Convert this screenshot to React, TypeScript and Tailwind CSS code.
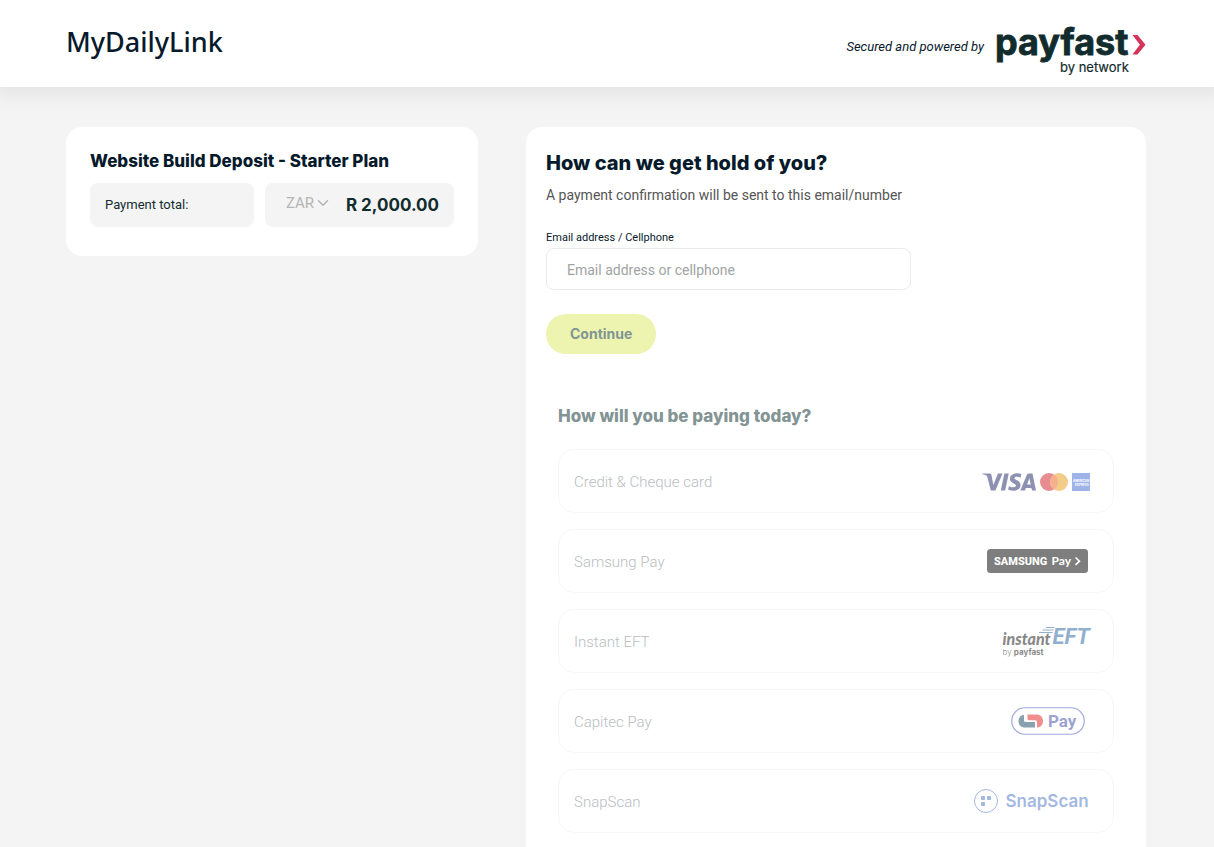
import React, { useState } from 'react';
import { ChevronDown } from 'lucide-react';
import { SiVisa } from 'react-icons/si';

const PayfastLogo = () => (
  <svg viewBox="0 0 152 50" className="h-[50px] w-[152px] overflow-visible" role="img" aria-label="payfast by network">
    <text x="1" y="29" fontSize="36" fontWeight="700" fill="#122c2e" stroke="#122c2e" strokeWidth="0.8" fontFamily="Inter, sans-serif">
      payfast
    </text>
    <text x="66" y="46" fontSize="13" fill="#122c2e" stroke="#122c2e" strokeWidth="0.2" fontFamily="Inter, sans-serif">
      by network
    </text>
    <path d="M138.500 9h5l8 9.800-8 9.800h-5l7.400-9.800z" fill="#d4335b" />
  </svg>
);

const CardLogos = () => (
  <div className="mt-0.5 flex items-center gap-1">
    <SiVisa className="h-[54px] w-[54px] text-[#1f2767]" aria-label="Visa" />
    <svg viewBox="0 0 28 18" className="h-[18px] w-7" aria-label="Mastercard">
      <circle cx="9" cy="9" r="9" fill="#d01c24" />
      <circle cx="19" cy="9" r="9" fill="#e89a18" />
      <path d="M14 1.5a9 9 0 0 1 0 15a9 9 0 0 1 0-15z" fill="#ee651c" />
    </svg>
    <svg viewBox="0 0 18 18" className="h-[18px] w-[18px]" aria-label="American Express">
      <rect width="18" height="18" fill="#4069d2" />
      <text x="1" y="8.500" fontSize="3" fontWeight="700" fill="#fff" fontFamily="Inter, sans-serif">
        AMERICAN
      </text>
      <text x="3" y="12.500" fontSize="3" fontWeight="700" fill="#fff" fontFamily="Inter, sans-serif">
        EXPRESS
      </text>
    </svg>
  </div>
);

const SamsungLogo = () => (
  <svg viewBox="0 0 102 24" className="mr-0.5 h-6 w-[102px]" aria-label="Samsung Pay">
    <rect x="1" width="101" height="24" rx="3.5" fill="#000" />
    <text x="8" y="16" fontSize="11" fontWeight="800" fill="#fff" fontFamily="Roboto, sans-serif">
      SAMSUNG
    </text>
    <text x="65.500" y="16" fontSize="12" fontWeight="700" fill="#fff" fontFamily="Lato, sans-serif">
      Pay
    </text>
    <path d="M89.500 8.500l4 3.700-4 3.700" fill="none" stroke="#fff" strokeWidth="1.600" />
  </svg>
);

const InstantEftLogo = () => (
  <svg viewBox="0 0 88 32" className="h-8 w-[88px] overflow-visible" aria-label="instantEFT by payfast">
    <text x="0.500" y="20" fontSize="16" fontWeight="900" fontStyle="italic" fill="#111" fontFamily="Lato, sans-serif">
      instant
    </text>
    <text x="50.500" y="18.500" fontSize="22" fontWeight="700" fontStyle="italic" fill="#24639c" fontFamily="'Liberation Sans Narrow', Roboto, sans-serif">
      EFT
    </text>
    <path d="M44 2.500h8.500M40.500 5h11M37 7.500h13.500" stroke="#24639c" strokeWidth="1" />
    <text x="0.500" y="30" fontSize="8" fill="#111" fontFamily="Inter, sans-serif">
      by <tspan fontWeight="700">payfast</tspan>
    </text>
  </svg>
);

const CapitecLogo = () => (
  <svg viewBox="0 0 74 28" className="mr-[5px] h-7 w-[74px]" aria-label="Capitec Pay">
    <rect x="0.75" y="0.75" width="72.5" height="26.5" rx="13.25" fill="#fff" stroke="#4353b5" strokeWidth="1.2" />
    <path d="M13 8v5.500c0 1 .8 1.400 1.800 1.400h9.200v5.600H14c-4 0-6.500-2.500-6.500-6.300C7.500 10.700 9.800 8 13 8z" fill="#154561" />
    <path d="M16.500 7.500h9c4 0 6.500 2.500 6.500 6.500 0 3.500-2 6.500-6 6.500V15c0-1-.6-1.700-1.700-1.700h-6c-1.200 0-1.800-.7-1.800-1.700z" fill="#e3201f" />
    <text x="37" y="20" fontSize="17" fontWeight="700" fill="#3a48a8" fontFamily="Roboto, sans-serif">
      Pay
    </text>
  </svg>
);

const SnapScanLogo = () => (
  <svg viewBox="0 0 117 24" className="h-6 w-[117px] overflow-visible" aria-label="SnapScan">
    <circle cx="13" cy="12" r="11.500" fill="none" stroke="#4a73c4" strokeWidth="1" />
    <rect x="8" y="7" width="4" height="4" rx="0.8" fill="#4a73c4" />
    <rect x="14" y="7" width="4" height="4" rx="0.8" fill="#4a73c4" />
    <rect x="8" y="13" width="4" height="4" rx="0.8" fill="#4a73c4" />
    <text x="32.500" y="18" fontSize="17" fontWeight="600" fill="#4a73c4" fontFamily="Inter, sans-serif">
      SnapScan
    </text>
  </svg>
);

const methods = [
  { name: 'Credit & Cheque card', logo: <CardLogos /> },
  { name: 'Samsung Pay', logo: <SamsungLogo /> },
  { name: 'Instant EFT', logo: <InstantEftLogo /> },
  { name: 'Capitec Pay', logo: <CapitecLogo /> },
  { name: 'SnapScan', logo: <SnapScanLogo /> },
];

const Header = () => (
  <header className="relative bg-white shadow-[0_0_20px_8px_rgba(0,0,0,0.07)]">
    <div className="mx-auto flex h-[87px] max-w-[1082px] items-center justify-between pr-0.5">
      <div className="pb-1 font-['Noto_Sans',sans-serif] text-[27px] leading-9 font-medium text-[#071a2c]">MyDailyLink</div>
      <div className="flex items-center gap-2.5 pt-3.5">
        <span className="pb-2 text-[13px] leading-4 italic">Secured and powered by</span>
        <PayfastLogo />
      </div>
    </div>
  </header>
);

const OrderSummary = () => (
  <section className="self-start rounded-2xl bg-white px-6 pt-[22px] pb-[29px]">
    <h1 className="font-[Inter,sans-serif] text-[17px] leading-6 font-extrabold text-[#071a2c]">Website Build Deposit - Starter Plan</h1>
    <div className="mt-2.5 flex gap-[11px]">
      <div className="flex h-11 flex-1 items-center rounded-lg bg-[#f4f4f4] px-[15px] text-[13px] text-[#122c2e]">Payment total:</div>
      <div className="flex h-11 items-center justify-between gap-4 rounded-lg bg-[#f4f4f4] pr-[15px] pl-[21px]">
        <div className="relative flex items-center pb-1 text-[#b5b5b5]">
          <select aria-label="Currency" className="w-11 appearance-none bg-transparent text-[15px] leading-5" defaultValue="ZAR">
            <option>ZAR</option>
          </select>
          <ChevronDown className="pointer-events-none absolute -right-0.5 h-[18px] w-[18px]" strokeWidth={2} />
        </div>
        <span className="font-[Inter,sans-serif] text-[17px] leading-6 font-bold text-[#122c2e]">R 2,000.00</span>
      </div>
    </div>
  </section>
);

const ContactForm = () => {
  const [contact, setContact] = useState('');

  return (
    <form onSubmit={(e) => e.preventDefault()}>
      <h2 className="font-[Inter,sans-serif] text-[20px] leading-7 font-extrabold text-[#071a2c]">How can we get hold of you?</h2>
      <p className="mt-1.5 text-sm leading-6 text-[#555]">A payment confirmation will be sent to this email/number</p>
      <label htmlFor="contact" className="mt-[23px] block text-[11px] leading-4">
        Email address / Cellphone
      </label>
      <input
        id="contact"
        type="text"
        value={contact}
        onChange={(e) => setContact(e.target.value)}
        placeholder="Email address or cellphone"
        className="mt-0.5 block h-[42px] w-full max-w-[365px] rounded-lg border border-[#e8ebeb] px-5 pt-0.5 text-sm placeholder:text-[#a0a4a4]"
      />
      <button type="submit" className="mt-6 block h-10 rounded-full bg-[#ecf4b0] px-6 font-[Inter,sans-serif] text-sm font-bold text-[#839494]">
        Continue
      </button>
    </form>
  );
};

const PaymentMethods = () => (
  <div className="mt-[50px] px-3">
    <h2 className="font-[Inter,sans-serif] text-[17px] leading-6 font-extrabold text-[#839494]">How will you be paying today?</h2>
    <div className="mt-[21px] flex flex-col gap-4">
      {methods.map((method) => (
        <button
          key={method.name}
          type="button"
          disabled
          className="flex h-16 items-center justify-between rounded-2xl border border-[#f7f7fd] pr-[23px] pl-[15px] text-[15px] font-light text-[#b9bdc2]"
        >
          <span className="pt-0.5">{method.name}</span>
          <span className="opacity-50">{method.logo}</span>
        </button>
      ))}
    </div>
  </div>
);

const App: React.FC = () => {
  return (
    <div className="flex min-h-screen flex-col bg-[#f4f4f4] font-[Roboto,sans-serif] text-[#071a2c]">
      <Header />
      <main className="mx-auto grid w-full max-w-[1082px] flex-1 grid-cols-[412fr_620fr] gap-12 pt-10 pr-0.5">
        <OrderSummary />
        <section className="rounded-t-2xl bg-white px-5 pt-[22px] pb-3.5">
          <ContactForm />
          <PaymentMethods />
        </section>
      </main>
    </div>
  );
};

export default App;
